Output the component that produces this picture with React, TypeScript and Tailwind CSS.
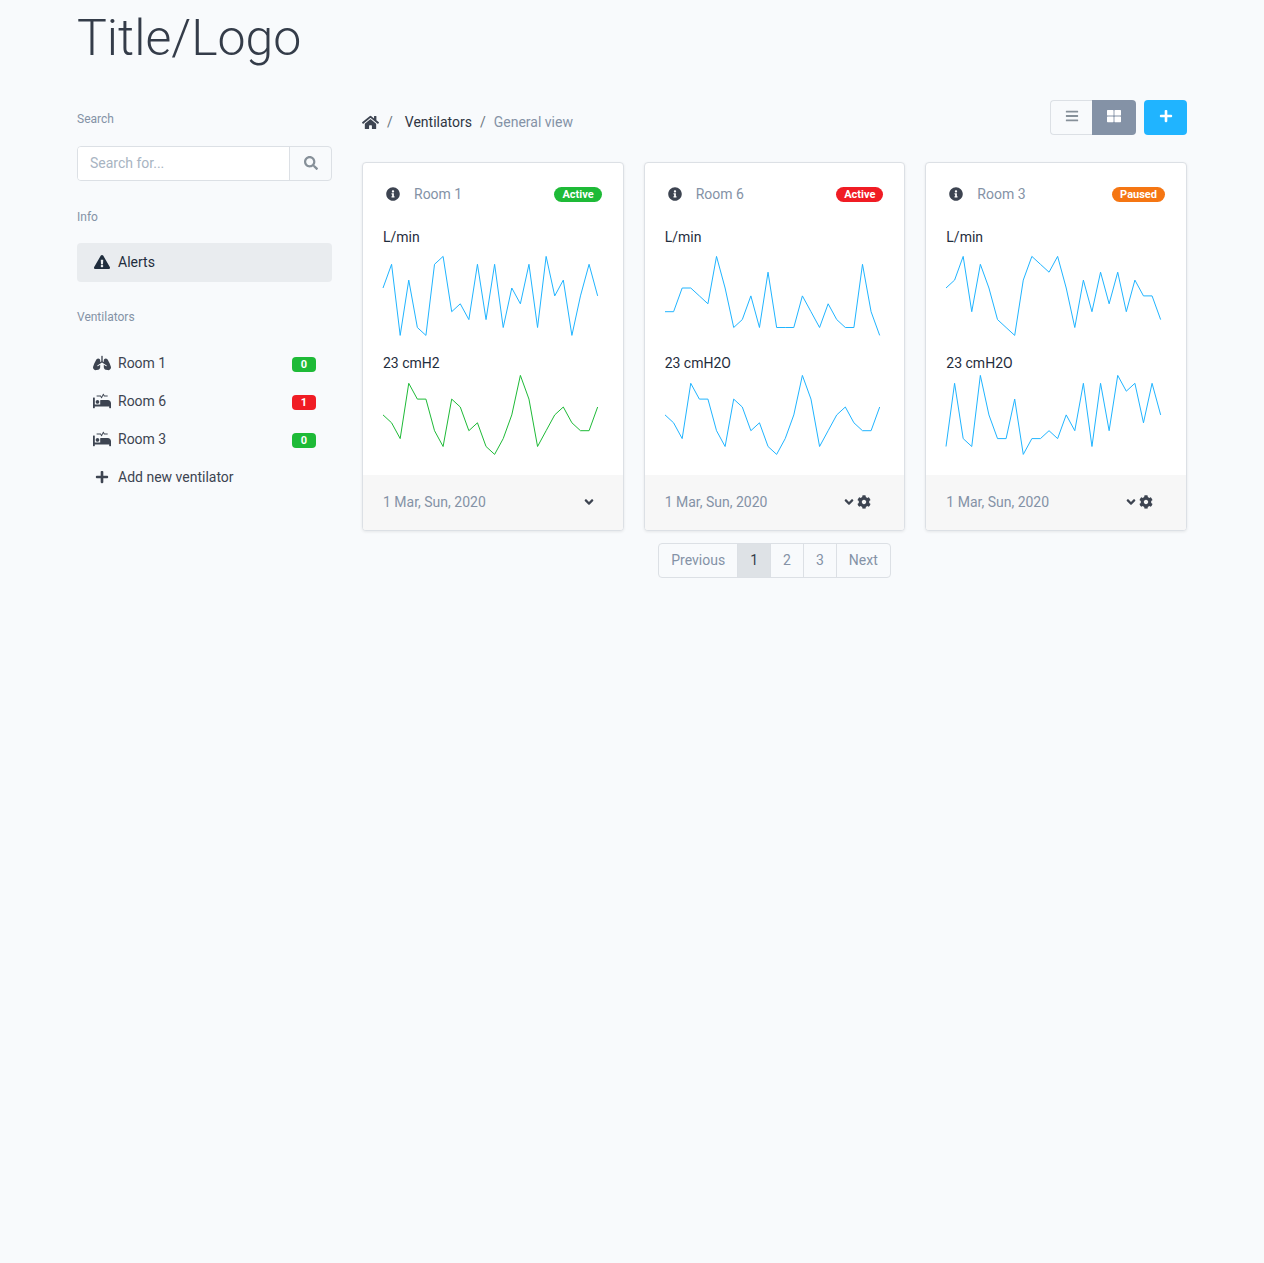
import type { ReactNode } from "react";
import {
  FaAngleDown,
  FaBars,
  FaCog,
  FaExclamationTriangle,
  FaHome,
  FaInfoCircle,
  FaLungs,
  FaPlus,
  FaProcedures,
  FaSearch,
  FaThLarge,
} from "react-icons/fa";

const BLUE = "#20b4ff";
const GREEN = "#1eba37";

type Room = {
  name: string;
  status: string;
  statusClass: string;
  pressureLabel: string;
  pressureColor: string;
  flow: number[];
  pressure: number[];
  settings: boolean;
};

const wave = [5, 4, 2, 9, 7, 7, 3, 1, 7, 6, 3, 4, 1, 0, 2, 5, 10, 7, 1, 3, 5, 6, 4, 3, 3, 6];

const rooms: Room[] = [
  {
    name: "Room 1",
    status: "Active",
    statusClass: "bg-[#1eba37]",
    pressureLabel: "23 cmH2",
    pressureColor: GREEN,
    flow: [6, 9, 0, 7, 1, 0, 9, 10, 3, 4, 2, 9, 2, 9, 1, 6, 4, 9, 1, 10, 5, 7, 0, 5, 9, 5],
    pressure: wave,
    settings: false,
  },
  {
    name: "Room 6",
    status: "Active",
    statusClass: "bg-[#f01c24]",
    pressureLabel: "23 cmH2O",
    pressureColor: BLUE,
    flow: [3, 3, 6, 6, 5, 4, 10, 6, 1, 2, 5, 1, 8, 1, 1, 1, 5, 3, 1, 4, 2, 1, 1, 9, 3, 0],
    pressure: wave,
    settings: true,
  },
  {
    name: "Room 3",
    status: "Paused",
    statusClass: "bg-[#f57613]",
    pressureLabel: "23 cmH2O",
    pressureColor: BLUE,
    flow: [6, 7, 10, 3, 9, 6, 2, 1, 0, 7, 10, 9, 8, 10, 6, 1, 7, 3, 8, 4, 8, 3, 7, 5, 5, 2],
    pressure: [1, 9, 2, 1, 10, 5, 2, 2, 7, 0, 2, 2, 3, 2, 5, 3, 9, 1, 9, 3, 10, 8, 9, 4, 9, 5],
    settings: true,
  },
];

function Sparkline({ values, color, label }: { values: number[]; color: string; label: string }) {
  const points = values
    .map((v, i) => `${(i * 215) / (values.length - 1)},${79.4 - v * 7.9}`)
    .join(" ");
  return (
    <svg
      role="img"
      aria-label={label}
      viewBox="0 0 215 80"
      preserveAspectRatio="none"
      className="block h-20 w-full overflow-visible"
    >
      <polyline
        points={points}
        fill="none"
        stroke={color}
        strokeWidth="1"
        vectorEffect="non-scaling-stroke"
      />
    </svg>
  );
}

function RoomCard({ room }: { room: Room }) {
  return (
    <article className="overflow-hidden rounded border border-[#dce0e5] bg-white shadow-[0_1px_3px_rgba(0,0,0,0.08)]">
      <header className="flex h-[62px] items-center px-5">
        <FaInfoCircle className="ml-[3px] size-[14px] text-[#3d4451]" />
        <h2 className="ml-[14px] text-[#8492a6]">{room.name}</h2>
        <span
          className={`mr-px ml-auto rounded-full px-2 text-[11px] leading-[15px] font-bold text-white ${room.statusClass}`}
        >
          {room.status}
        </span>
      </header>
      <div className="pr-[25px] pb-5 pl-5 text-[#1f2d3d]">
        <p className="mb-[7px] leading-6">L/min</p>
        <Sparkline values={room.flow} color={BLUE} label={`${room.name} flow`} />
        <p className="mt-[15px] leading-6">{room.pressureLabel}</p>
        <Sparkline
          values={room.pressure}
          color={room.pressureColor}
          label={`${room.name} pressure`}
        />
      </div>
      <footer className="flex h-[55px] items-center bg-[#f7f7f7] px-5 pb-[2px]">
        <time className="text-[#8492a6]" dateTime="2020-03-01">
          1 Mar, Sun, 2020
        </time>
        <div className="mr-[7px] ml-auto flex items-center gap-px text-[#3d4451]">
          <button type="button" aria-label={`Expand ${room.name}`}>
            <FaAngleDown className="size-[14px]" />
          </button>
          {room.settings && (
            <button type="button" aria-label={`${room.name} settings`} className="mr-[6px]">
              <FaCog className="size-[14px]" />
            </button>
          )}
        </div>
      </footer>
    </article>
  );
}

function SideLink({
  icon,
  count,
  countClass = "",
  active = false,
  children,
}: {
  icon: ReactNode;
  count?: number;
  countClass?: string;
  active?: boolean;
  children: ReactNode;
}) {
  return (
    <li>
      <a
        href="#"
        className={
          active
            ? "flex h-[39px] items-center rounded bg-[#e9ecef] px-4 pb-[2px] text-[#1f2d3d]"
            : "flex h-[38px] items-center rounded px-4 text-[#3d4451]"
        }
      >
        <span className="mr-[7px] flex w-[18px] justify-center">{icon}</span>
        {children}
        {count !== undefined && (
          <span
            className={`mt-[2px] ml-auto w-6 rounded text-center text-[11px] leading-[15px] font-bold text-white ${countClass}`}
          >
            {count}
          </span>
        )}
      </a>
    </li>
  );
}

export default function App() {
  return (
    <div className="min-h-screen bg-[#f8fafc] font-['Roboto',sans-serif] text-sm text-[#3d4451]">
      <div className="mx-auto max-w-[1140px] px-[15px]">
        <h1 className="pt-2 text-[50px] leading-[60px] font-light text-[#343c49]">Title/Logo</h1>
        <div className="mt-8 grid grid-cols-1 gap-[30px] md:grid-cols-[255fr_825fr]">
          <aside>
            <label htmlFor="search" className="mt-[9px] block text-xs leading-5 text-[#8492a6]">
              Search
            </label>
            <form className="mt-[17px] flex h-[35px] overflow-hidden rounded border border-[#dce0e5]">
              <input
                id="search"
                type="text"
                placeholder="Search for..."
                className="min-w-0 flex-1 bg-white px-3 pb-[2px] outline-none placeholder:text-[#a8b4c2]"
              />
              <button
                type="submit"
                aria-label="Search"
                className="flex w-[42px] items-center justify-center border-l border-[#dce0e5] pb-[2px] text-[#869099]"
              >
                <FaSearch className="size-[14px]" />
              </button>
            </form>

            <h2 className="mt-[26px] text-xs leading-5 text-[#8492a6]">Info</h2>
            <ul className="mt-4">
              <SideLink active icon={<FaExclamationTriangle className="size-4" />}>
                Alerts
              </SideLink>
            </ul>

            <h2 className="mt-[25px] text-xs leading-5 text-[#8492a6]">Ventilators</h2>
            <ul className="mt-[17px]">
              <SideLink icon={<FaLungs className="size-[18px]" />} count={0} countClass="bg-[#1eba37]">
                Room 1
              </SideLink>
              <SideLink icon={<FaProcedures className="size-[18px]" />} count={1} countClass="bg-[#f01c24]">
                Room 6
              </SideLink>
              <SideLink icon={<FaProcedures className="size-[18px]" />} count={0} countClass="bg-[#1eba37]">
                Room 3
              </SideLink>
              <SideLink icon={<FaPlus className="size-[14px]" />}>Add new ventilator</SideLink>
            </ul>
          </aside>

          <main>
            <div className="flex items-start justify-between">
              <nav aria-label="Breadcrumb" className="mt-3">
                <ol className="flex items-center leading-5">
                  <li>
                    <a href="#" aria-label="Home">
                      <FaHome className="size-[17px]" />
                    </a>
                  </li>
                  <li className="ml-2 text-[#6c757d]">/</li>
                  <li className="ml-3">
                    <a href="#" className="text-[#2f3542]">
                      Ventilators
                    </a>
                  </li>
                  <li className="ml-2 text-[#6c757d]">/</li>
                  <li className="ml-2 text-[#8492a6]" aria-current="page">
                    General view
                  </li>
                </ol>
              </nav>
              <div className="flex gap-2">
                <div className="flex h-[35px]">
                  <button
                    type="button"
                    aria-label="List view"
                    className="flex w-[42px] items-center justify-center rounded-l border border-r-0 border-[#dce0e5] pb-[3px] text-[#869099]"
                  >
                    <FaBars className="size-[14px]" />
                  </button>
                  <button
                    type="button"
                    aria-label="Grid view"
                    aria-pressed="true"
                    className="flex w-11 items-center justify-center rounded-r bg-[#8492a6] pb-[3px] text-white"
                  >
                    <FaThLarge className="size-[14px]" />
                  </button>
                </div>
                <button
                  type="button"
                  aria-label="Add"
                  className="flex h-[35px] w-[43px] items-center justify-center rounded bg-[#20b4ff] pb-[3px] text-white"
                >
                  <FaPlus className="size-[14px]" />
                </button>
              </div>
            </div>

            <section className="mt-[27px] grid grid-cols-1 gap-5 sm:grid-cols-3">
              {rooms.map((room) => (
                <RoomCard key={room.name} room={room} />
              ))}
            </section>

            <nav aria-label="Pages" className="mt-3 flex justify-center">
              <div className="flex h-[35px] divide-x divide-[#dce0e5] overflow-hidden rounded border border-[#dce0e5] text-[#8492a6]">
                <button type="button" className="px-3 pb-[2px]">
                  Previous
                </button>
                <button
                  type="button"
                  aria-current="page"
                  className="bg-[#dee2e6] px-3 pb-[2px] text-[#343c49]"
                >
                  1
                </button>
                <button type="button" className="px-3 pb-[2px]">
                  2
                </button>
                <button type="button" className="px-3 pb-[2px]">
                  3
                </button>
                <button type="button" className="px-3 pb-[2px]">
                  Next
                </button>
              </div>
            </nav>
          </main>
        </div>
      </div>
    </div>
  );
}
